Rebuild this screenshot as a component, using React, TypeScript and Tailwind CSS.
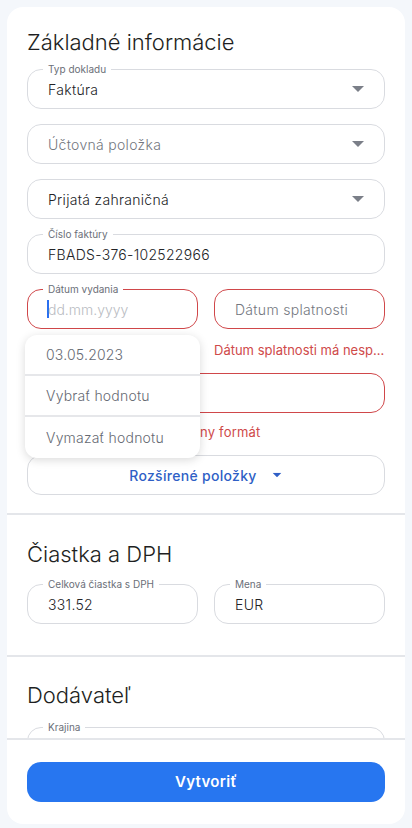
import React from 'react'

function Caret({ className = '' }: { className?: string }) {
  return (
    <svg width="12" height="6" viewBox="0 0 12 6" className={className}>
      <path d="M0 0h12L6 6z" fill="currentColor" />
    </svg>
  )
}

interface FieldProps {
  label?: string
  value?: string
  placeholder?: string
  select?: boolean
  error?: boolean
  children?: React.ReactNode
}

function Field({ label, value, placeholder, select, error, children }: FieldProps) {
  return (
    <div
      className={`relative h-10 rounded-[14px] border flex items-center px-5 ${
        error ? 'border-[#d0474a]' : 'border-[#d9dbe0]'
      }`}
    >
      {label && (
        <span className="absolute -top-[8px] left-[15px] bg-white px-[5px] text-[10px] leading-[14px] text-[#6b6f78]">
          {label}
        </span>
      )}
      {children}
      {value && <span className="flex-1 text-[14px] font-[350] text-[#222326] tracking-[0.3px]">{value}</span>}
      {!value && placeholder && (
        <span className="flex-1 text-[14px] font-[350] text-[#737780] tracking-[0.3px]">{placeholder}</span>
      )}
      {select && <Caret className="text-[#7b7f88]" />}
    </div>
  )
}

function DateMenu() {
  return (
    <div className="absolute top-[46px] -left-[2px] w-[175px] rounded-xl bg-white shadow-[0_2px_10px_rgba(0,0,0,0.15)] z-10 overflow-hidden">
      {['03.05.2023', 'Vybrať hodnotu', 'Vymazať hodnotu'].map((t, i) => (
        <div
          key={t}
          className={`h-[41px] flex items-center px-[21px] text-[14px] font-[350] text-[#666a73] tracking-[0.2px] ${
            i < 2 ? 'border-b-2 border-[#e6e7ea]' : ''
          }`}
        >
          {t}
        </div>
      ))}
    </div>
  )
}

export default function App() {
  return (
    <div
      className="min-h-[828px] bg-[#f4f7fb] p-[7px] pb-[4px]"
      style={{ fontFamily: 'Inter, "Noto Sans", sans-serif' }}
    >
      <div className="bg-white rounded-2xl h-[817px] flex flex-col overflow-hidden">
        {/* scroll area */}
        <div className="h-[731px] overflow-hidden">
          {/* Základné informácie */}
          <div className="px-5 pt-[22px] pb-[18px] border-b-2 border-[#e4e6ea]">
            <h2 className="text-[22px] leading-[26px] font-light text-[#1e1f22] mb-[14px]">Základné informácie</h2>
            <div className="flex flex-col gap-[15px]">
              <Field label="Typ dokladu" value="Faktúra" select />
              <Field placeholder="Účtovná položka" select />
              <Field value="Prijatá zahraničná" select />
              <Field label="Číslo faktúry" value="FBADS-376-102522966" />
            </div>

            <div className="relative grid grid-cols-2 gap-4 mt-[15px]">
              <div>
                <Field label="Dátum vydania" error>
                  <span className="w-[2px] h-[18px] bg-[#2a6ff0] -ml-[1px]" />
                  <span className="flex-1 text-[14px] font-[350] text-[#b9bcc2] -ml-[1px]">dd.mm.yyyy</span>
                </Field>
              </div>
              <div>
                <Field placeholder="Dátum splatnosti" error />
                <p className="mt-[12px] text-[13px] leading-[18px] text-[#cf4a4a] truncate">
                  Dátum splatnosti má nesprávny formát
                </p>
              </div>
              <DateMenu />
            </div>

            <div className="mt-[14px]">
              <Field error />
              <p className="mt-[10px] text-[13px] leading-[18px] text-[#cf4a4a] tracking-[0.2px]">
                Dátum dodania má nesprávny formát
              </p>
            </div>

            <button className="mt-[14px] w-full h-10 rounded-[14px] border border-[#d9dbe0] flex items-center justify-center gap-[14px] text-[14px] text-[#2f5fc6] font-medium tracking-[0.3px]">
              Rozšírené položky
              <Caret className="scale-75" />
            </button>
          </div>

          {/* Čiastka a DPH */}
          <div className="px-5 pt-[26px] pb-[31px] border-b-2 border-[#e4e6ea]">
            <h2 className="text-[22px] leading-[26px] font-light text-[#1e1f22] mb-[17px]">Čiastka a DPH</h2>
            <div className="grid grid-cols-2 gap-4">
              <Field label="Celková čiastka s DPH" value="331.52" />
              <Field label="Mena" value="EUR" />
            </div>
          </div>

          {/* Dodávateľ */}
          <div className="px-5 pt-[25px]">
            <h2 className="text-[22px] leading-[26px] font-light text-[#1e1f22] mb-[19px]">Dodávateľ</h2>
            <Field label="Krajina" value="" />
          </div>
        </div>

        {/* footer */}
        <div className="border-t-2 border-[#e4e6ea] px-5 pt-[22px]">
          <button className="w-full h-10 rounded-[14px] bg-[#2776f0] text-white text-[15px] font-semibold tracking-[0.3px]">
            Vytvoriť
          </button>
        </div>
      </div>
    </div>
  )
}
